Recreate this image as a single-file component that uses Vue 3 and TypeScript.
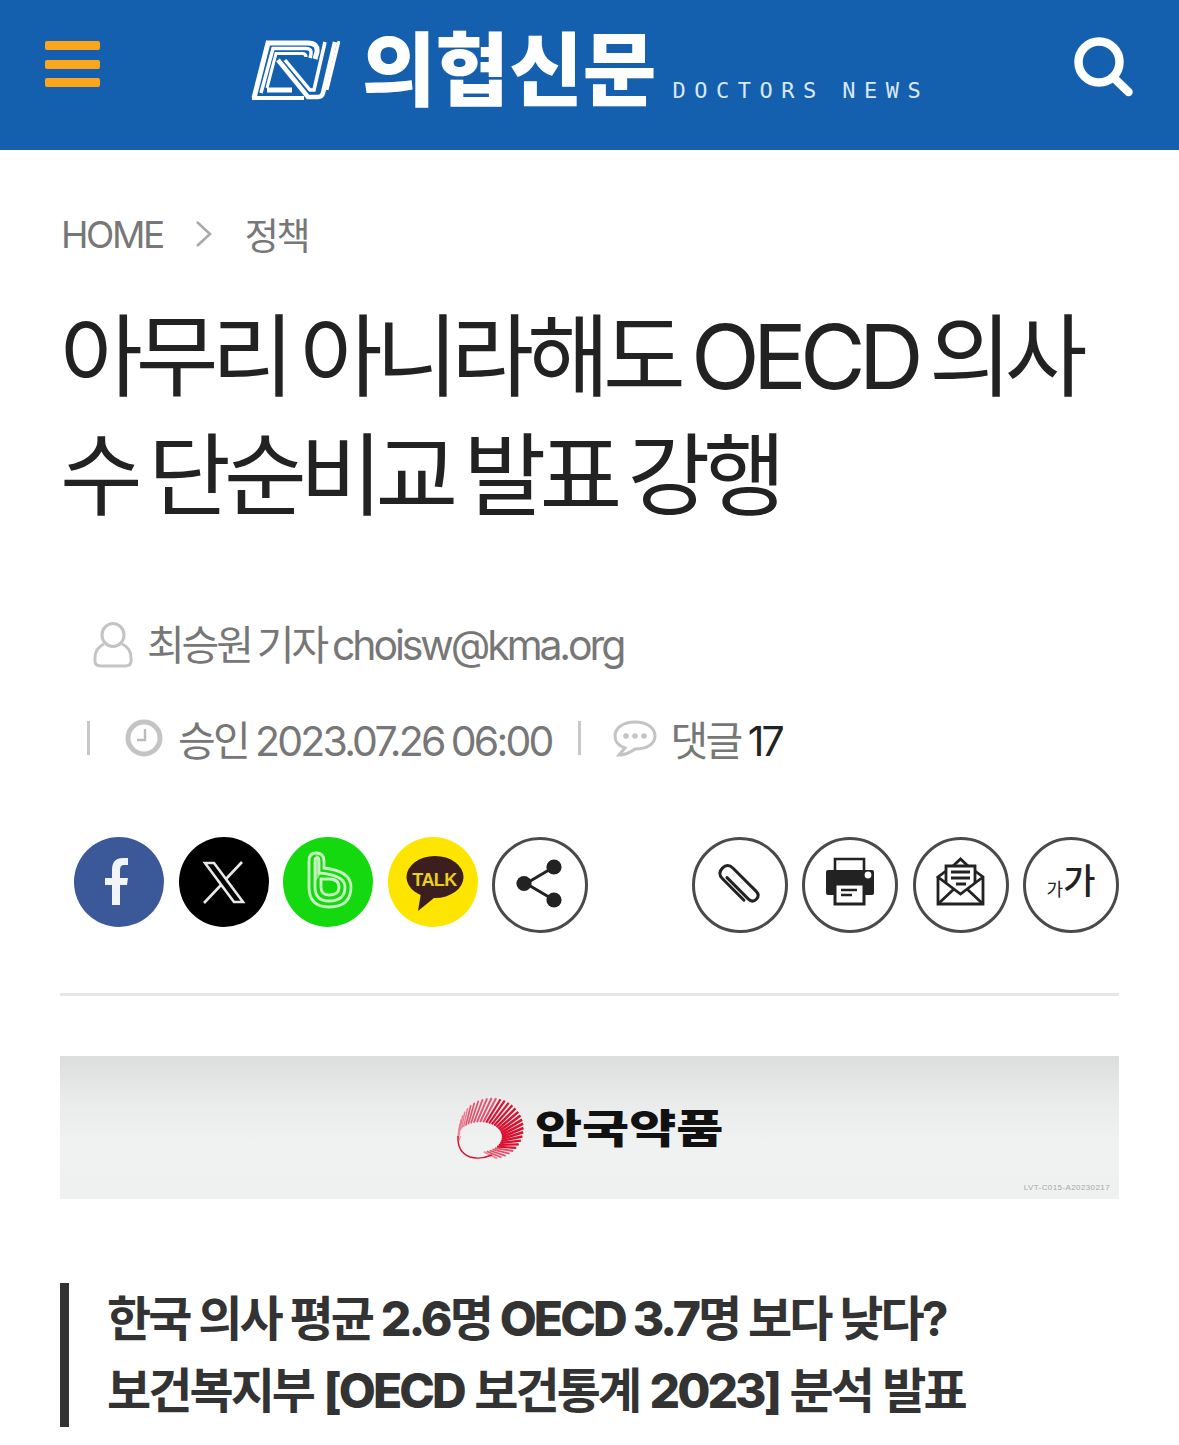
<script setup lang="ts">
interface Spoke { d: string; w: number; c: string }
const spokes: Spoke[] = Array.from({ length: 35 }, (_, i) => {
  const t = i / 34;
  const deg = 165 + t * 275;
  const a = deg * Math.PI / 180;
  const ox = 41.5 + 32 * Math.cos(a);
  const oy = 38.5 + 30.5 * Math.sin(a);
  const ix = 30 + 22 * Math.cos(a);
  const iy = 47 + 15 * Math.sin(a);
  const strength = t < 0.7 ? t / 0.7 : (1 - t) / 0.3 * 0.7 + 0.3;
  return {
    d: `M${ox.toFixed(1)} ${oy.toFixed(1)}L${ix.toFixed(1)} ${iy.toFixed(1)}`,
    w: 1.1 + 1.5 * strength,
    c: strength > 0.6 ? "#d9102f" : strength > 0.3 ? "#e2506b" : "#ea7f93",
  };
});
</script>

<template>
  <div class="page">
    <header class="top">
      <div class="burger"><i></i><i></i><i></i></div>
      <div class="brand">
        <svg class="mark" viewBox="0 0 90 60" width="90" height="60" fill="none" stroke="#fff">
          <path d="M4 58 L18 3 H58 Q68 3 67 12 L65 19" stroke-width="5" />
          <path d="M11 53 L23 8.500 H56 Q62 8.500 61 14 L60 18" stroke-width="3.500" />
          <path d="M17 48 L26 13.500 H52 Q56 13.500 56 17" stroke-width="3" />
          <path d="M2 58 H54" stroke-width="4" />
          <path d="M17 50 H42" stroke-width="5" />
          <path d="M28 20 L58 57 H68 Q72 57 73 53 L85 2" stroke-width="4.500" />
          <path d="M35 20 L60 50 H64 L75 2" stroke-width="3.500" />
          <path d="M89 1 L77 50" stroke-width="3" />
        </svg>
        <span class="brand-ko">의협신문</span>
        <span class="brand-en">DOCTORS NEWS</span>
      </div>
      <svg class="search" viewBox="0 0 60 60" width="60" height="60" fill="none" stroke="#fff">
        <circle cx="25" cy="25" r="20.5" stroke-width="8.5" />
        <path d="M41 42 L54.5 55" stroke-width="8.5" stroke-linecap="round" />
      </svg>
    </header>

    <main class="content">
      <nav class="crumb">
        <span>HOME</span>
        <svg viewBox="0 0 18 30" width="18" height="30" fill="none" stroke="#aaa" stroke-width="2.6"><path d="M2 3 L15 15 L2 27" /></svg>
        <span>정책</span>
      </nav>

      <h1 class="title">아무리 아니라해도 OECD 의사<br />수 단순비교 발표 강행</h1>

      <div class="byline">
        <svg class="user" viewBox="0 0 40 46" width="40" height="46" fill="none" stroke="#c4c4c4" stroke-width="3">
          <ellipse cx="20" cy="13" rx="11" ry="11.5" />
          <path d="M11 22 Q2 26 2 36 V39 Q2 44 8 44 H32 Q38 44 38 39 V36 Q38 26 29 22" />
        </svg>
        <span>최승원 기자 choisw@kma.org</span>
      </div>

      <div class="meta">
        <i class="sep first"></i>
        <svg class="clock" viewBox="0 0 38 38" width="38" height="38" fill="none">
          <circle cx="19" cy="19" r="16" stroke="#c4c4c4" stroke-width="5" />
          <path d="M20 10 V21 H12" stroke="#bbb" stroke-width="2.4" />
        </svg>
        <span class="date">승인 2023.07.26 06:00</span>
        <i class="sep second"></i>
        <svg class="bubble" viewBox="0 0 44 38" width="44" height="38" fill="none" stroke="#c4c4c4" stroke-width="3">
          <path d="M22 3 C10 3 2 9 2 17 C2 23 6 27 12 29 L6 36 C12 36 18 33 22 30 C34 30 42 25 42 17 C42 9 34 3 22 3 Z" />
          <g fill="#c4c4c4" stroke="none"><circle cx="13" cy="17" r="2.8" /><circle cx="22" cy="17" r="2.8" /><circle cx="31" cy="17" r="2.8" /></g>
        </svg>
        <span class="date">댓글 <b>17</b></span>
      </div>

      <div class="share-row">
        <div class="group left">
          <span class="sns fb">
            <svg viewBox="0 0 90 90" width="90" height="90"><path d="M46 68 H38 V48 H31 V41 H38 V33 Q38 21 49 21 H54 V28 H50 Q46 28 46 33 V41 H54 L53 48 H46 Z" fill="#f2f4f9" /></svg>
          </span>
          <span class="sns x">
            <svg viewBox="0 0 90 90" width="90" height="90" fill="none" stroke="#e8e8e8">
              <path d="M26 26 H35 L64 65 H55 Z" stroke-width="2.6" />
              <path d="M63 25 L47 42 M42 48 L25 66" stroke-width="2.600" />
            </svg>
          </span>
          <span class="sns band">
            <svg viewBox="0 0 90 90" width="90" height="90" fill="none" stroke="#c6f3bf">
              <path d="M33 18 Q37 18 37 24 V38 L33 44 Z" fill="#8fe784" stroke="none" />
              <path d="M26 50 V24 Q26 16 33 16 Q41 16 41 24 V31 Q68 34 68 50 Q68 70 46 70 Q26 70 26 50" stroke-width="2.800" />
              <path d="M32 50 V24 Q32 21 34 21 Q36 21 36 24 V36 Q62 38 62 50 Q62 64 46 64 Q32 64 32 50" stroke-width="2.800" />
              <path d="M38 50 V42 H46 Q56 42 56 50 Q56 58 46 58 Q38 58 38 50" stroke-width="2.800" />
            </svg>
          </span>
          <span class="sns kakao">
            <svg viewBox="0 0 90 90" width="90" height="90">
              <ellipse cx="47" cy="40" rx="28.500" ry="21" fill="#3c1e1e" />
              <path d="M33 56 L30 74 L46 61 Z" fill="#3c1e1e" />
            </svg>
            <span class="talk">TALK</span>
          </span>
          <span class="ring">
            <svg viewBox="0 0 96 96" width="96" height="96" fill="#222">
              <path d="M34 46.500 L62 30 M34 46.500 L62 63" stroke="#222" stroke-width="3" />
              <circle cx="32" cy="46.500" r="7.600" /><circle cx="62" cy="30" r="7.600" /><circle cx="62" cy="63" r="7.600" />
            </svg>
          </span>
        </div>
        <div class="group right">
          <span class="ring">
            <svg viewBox="0 0 96 96" width="96" height="96" fill="none" stroke="#222" stroke-width="3" stroke-linecap="round">
              <g transform="rotate(-45 47 47)">
                <path d="M43 34 V64 Q43 70 48.500 70 Q54 70 54 64 V32 Q54 24 46.500 24 Q39 24 39 32 V62" />
              </g>
            </svg>
          </span>
          <span class="ring">
            <svg viewBox="0 0 96 96" width="96" height="96">
              <path d="M33 34 V22 H62 V34" fill="none" stroke="#222" stroke-width="2.6" />
              <path d="M26 33 H70 Q72 33 72 35 V56 Q72 58 70 58 H63 V49 H33 V58 H26 Q24 58 24 56 V35 Q24 33 26 33 Z" fill="#222" />
              <circle cx="66" cy="38" r="3.4" fill="#fff" />
              <path d="M33 47 H62 V67 H33 Z" fill="#fff" stroke="#222" stroke-width="3" />
              <path d="M39 53 H55 M39 58 H50" stroke="#222" stroke-width="2.500" />
            </svg>
          </span>
          <span class="ring">
            <svg viewBox="0 0 96 96" width="96" height="96" fill="none" stroke="#222" stroke-width="2.800">
              <path d="M25 40 V67 H70 V40 L62 34 M33 34 L25 40 L47.500 57 L70 40" />
              <path d="M25 67 L41 52 M70 67 L54 52" />
              <path d="M33 46 V29 H62 V46" />
              <path d="M40 29 L47.500 22 L55 29" />
              <path d="M38 35 H57 M38 41 H57 M43 47 H53" />
            </svg>
          </span>
          <span class="ring font"><small>가</small><em>가</em></span>
        </div>
      </div>

      <hr class="rule" />

      <div class="banner">
        <div class="ad-logo">
          <svg viewBox="0 0 85 75" width="85" height="75" fill="none">
            <path v-for="(s, i) in spokes" :key="i" :d="s.d" :stroke="s.c" :stroke-width="s.w" />
            <path d="M8 46 Q7 62 20 67 Q30 70 42 65" stroke="#d9102f" stroke-width="1.400" />
          </svg>
          <span>안국약품</span>
        </div>
        <small class="ad-code">LVT-C015-A20230217</small>
      </div>

      <blockquote class="lead"><span class="line-a">한국 의사 평균 <span class="latin">2.6</span>명 <span class="latin">OECD 3.7</span>명 보다 낮다?</span><br /><span class="line-b">보건복지부 <span class="latin">[OECD</span> 보건통계 <span class="latin">2023]</span> 분석 발표</span></blockquote>
    </main>
  </div>
</template>

<style scoped>
.page {
  width: 1179px;
  height: 1445px;
  overflow: hidden;
  background: #fff;
  font-family: Inter, "Noto Sans CJK KR", sans-serif;
  color: #222;
}
.top {
  height: 150px;
  background: #1560ae;
  display: flex;
  align-items: center;
  padding: 0 45px;
  box-sizing: border-box;
  position: relative;
}
.burger {
  width: 55px;
  display: flex;
  flex-direction: column;
  gap: 9.500px;
  margin-top: -22px;
}
.burger i {
  display: block;
  height: 9px;
  border-radius: 2px;
  background: #fca61d;
}
.brand {
  display: flex;
  align-items: flex-end;
  margin-left: 150px;
  margin-top: -22px;
}
.mark { margin-bottom: 10px; margin-right: 24px; flex: none; }
.brand-ko {
  color: #fff;
  font: 900 80px/92px "Noto Sans CJK KR", sans-serif;
  letter-spacing: 0;
  margin-left: -2px;
}
.brand-en {
  color: #d9e8f6;
  font: 400 22px/24px "DejaVu Sans Mono", monospace;
  letter-spacing: 8.500px;
  word-spacing: -4px;
  margin-left: 16px;
  margin-bottom: 7px;
  white-space: nowrap;
}
.search { position: absolute; left: 1074px; top: 37px; }
.content { padding: 0 60px; }
.crumb {
  display: flex;
  align-items: center;
  height: 60px;
  margin-top: 54px;
  margin-left: 1px;
  font-size: 37px;
  letter-spacing: -2.400px;
  color: #777;
}
.crumb svg { margin: 0 32px; }
.title {
  margin: 33px 0 0;
  font-weight: 400;
  font-size: 90px;
  line-height: 119px;
  letter-spacing: -7px;
  word-spacing: -6px;
  color: #222;
  white-space: nowrap;
}
.byline {
  display: flex;
  align-items: center;
  gap: 14px;
  margin: 77px 0 0 33px;
  height: 60px;
  font-size: 41px;
  letter-spacing: -3.100px;
  word-spacing: -2.500px;
  color: #777;
}
.user { margin-top: 6px; }
.meta {
  display: flex;
  align-items: center;
  height: 60px;
  margin: 36px 0 0 27px;
  font-size: 41px;
  letter-spacing: -2.800px;
  word-spacing: -1.500px;
  color: #777;
}
.sep { width: 3px; height: 34px; background: #c8c8c8; display: block; }
.clock { margin: 0 15px 0 35px; }
.second { margin: 0 32px 0 26px; }
.bubble { margin-right: 14px; }
.date b { font-weight: 400; color: #222; }
.share-row {
  display: flex;
  justify-content: space-between;
  margin-top: 69px;
  padding-left: 14px;
}
.group { display: flex; align-items: flex-start; }
.left { gap: 14.500px; }
.right { gap: 14.330px; }
.sns {
  width: 90px;
  height: 90px;
  border-radius: 50%;
  position: relative;
  display: block;
}
.sns svg { display: block; }
.fb { background: #3b5998; }
.x { background: #000; }
.band { background: #14d90f; }
.kakao { background: #fee500; }
.talk {
  position: absolute;
  left: 4px;
  right: 0;
  top: 31px;
  text-align: center;
  font: 700 18px/24px "Liberation Sans", sans-serif;
  letter-spacing: -0.600px;
  color: #e8d21a;
}
.ring {
  width: 96px;
  height: 96px;
  box-sizing: border-box;
  border: 3px solid #4a4a4a;
  border-radius: 50%;
  position: relative;
  display: flex;
  align-items: center;
  justify-content: center;
  flex: none;
}
.ring svg { position: absolute; left: -3px; top: -3px; }
.font { color: #222; font-family: "Noto Sans CJK KR", sans-serif; }
.font small { font-size: 18px; margin-top: 6px; font-style: normal; }
.font em { font-size: 35px; font-style: normal; font-weight: 500; margin-top: -14px; }
.rule {
  margin: 60px 0 0;
  border: 0;
  height: 3px;
  background: #e6e6e6;
}
.banner {
  height: 143px;
  margin-top: 60px;
  position: relative;
  display: flex;
  align-items: center;
  justify-content: center;
  background: linear-gradient(#dcdddd 0%, #e9eaea 30%, #f0f1f1 60%, #eff0f0 100%);
}
.ad-logo {
  display: flex;
  align-items: center;
  margin-left: -8px;
}
.ad-logo svg { flex: none; }
.ad-logo span {
  display: block;
  width: 186px;
  margin-top: -4px;
  font: 900 40px/60px "Noto Sans CJK KR", sans-serif;
  color: #111;
  white-space: nowrap;
  transform: scaleX(1.28);
  transform-origin: left center;
}
.ad-code {
  position: absolute;
  right: 9px;
  bottom: 6px;
  font: 400 8px/10px "Liberation Sans", sans-serif;
  letter-spacing: 0.400px;
  color: #a8a8a8;
}
.lead {
  margin: 84px 0 0;
  padding: 0 0 0 38px;
  border-left: 9px solid #333;
  font-weight: 700;
  font-size: 48px;
  line-height: 72px;
  letter-spacing: -2.950px;
  color: #333;
  white-space: nowrap;
}
.line-a { word-spacing: 0.400px; }
.line-b { word-spacing: 2px; }
.latin { font-weight: 800; font-family: Inter, sans-serif; }
</style>
